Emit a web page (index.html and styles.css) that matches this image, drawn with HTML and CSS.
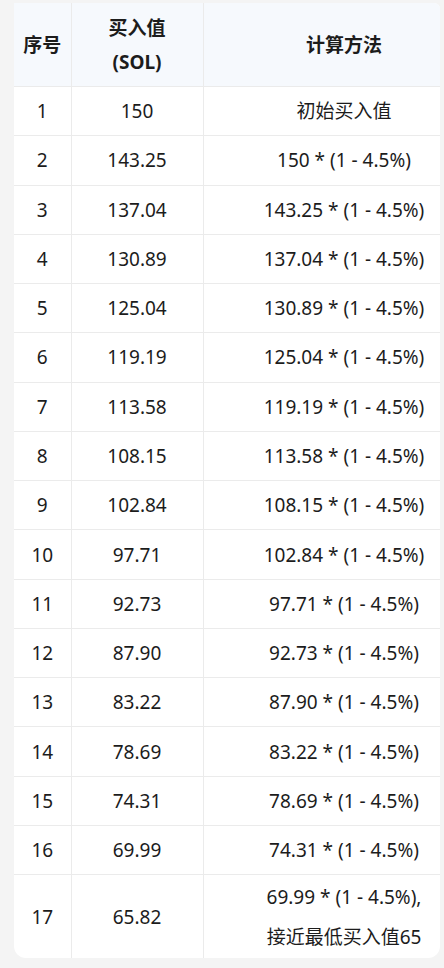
FILE: index.html
```html
<!DOCTYPE html>
<html lang="zh-CN">
<head>
    <meta charset="UTF-8">
    <meta name="viewport" content="width=device-width, initial-scale=1.0">
    <title>买入值计算</title>
    <link rel="stylesheet" href="styles.css">
</head>
<body>
    <div class="tabela-card">
        <table class="tabela">
            <colgroup>
                <col class="col-num">
                <col class="col-val">
                <col class="col-calc">
            </colgroup>
            <thead>
                <tr>
                    <th>序号</th>
                    <th>买入值<br>(SOL)</th>
                    <th>计算方法</th>
                </tr>
            </thead>
            <tbody>
                <tr><td>1</td><td>150</td><td>初始买入值</td></tr>
                <tr><td>2</td><td>143.25</td><td>150 * (1 - 4.5%)</td></tr>
                <tr><td>3</td><td>137.04</td><td>143.25 * (1 - 4.5%)</td></tr>
                <tr><td>4</td><td>130.89</td><td>137.04 * (1 - 4.5%)</td></tr>
                <tr><td>5</td><td>125.04</td><td>130.89 * (1 - 4.5%)</td></tr>
                <tr><td>6</td><td>119.19</td><td>125.04 * (1 - 4.5%)</td></tr>
                <tr><td>7</td><td>113.58</td><td>119.19 * (1 - 4.5%)</td></tr>
                <tr><td>8</td><td>108.15</td><td>113.58 * (1 - 4.5%)</td></tr>
                <tr><td>9</td><td>102.84</td><td>108.15 * (1 - 4.5%)</td></tr>
                <tr><td>10</td><td>97.71</td><td>102.84 * (1 - 4.5%)</td></tr>
                <tr><td>11</td><td>92.73</td><td>97.71 * (1 - 4.5%)</td></tr>
                <tr><td>12</td><td>87.90</td><td>92.73 * (1 - 4.5%)</td></tr>
                <tr><td>13</td><td>83.22</td><td>87.90 * (1 - 4.5%)</td></tr>
                <tr><td>14</td><td>78.69</td><td>83.22 * (1 - 4.5%)</td></tr>
                <tr><td>15</td><td>74.31</td><td>78.69 * (1 - 4.5%)</td></tr>
                <tr><td>16</td><td>69.99</td><td>74.31 * (1 - 4.5%)</td></tr>
                <tr class="ultima"><td>17</td><td>65.82</td><td>69.99 * (1 - 4.5%),<br>接近最低买入值65</td></tr>
            </tbody>
        </table>
    </div>
</body>
</html>
```

FILE: styles.css
```css
:root {
    --fundo: #f4f4f4;
    --branco: #ffffff;
    --cabecalho: #f6f9fd;
    --linha: #ebebeb;
    --texto: #1c1c1c;
}

body {
    margin: 0;
    padding-top: 3px;
    background-color: var(--fundo);
    font-family: "Noto Sans", "Noto Sans CJK SC", sans-serif;
    color: var(--texto);
}

.tabela-card {
    margin-left: 14px;
    width: 426px;
    background-color: var(--branco);
    border-radius: 0 6px 12px 12px;
    overflow: hidden;
}

.tabela {
    width: 471px;
    table-layout: fixed;
    border-collapse: collapse;
    font-size: 19px;
}

.tabela .col-num { width: 57px; }
.tabela .col-val { width: 132px; }
.tabela .col-calc { width: 282px; }

.tabela th, .tabela td {
    border: 1px solid var(--linha);
    text-align: center;
    padding: 0 4px;
}

.tabela th {
    background-color: var(--cabecalho);
    font-weight: 700;
    line-height: 34px;
    height: 83px;
    border-top: none;
}

.tabela td {
    height: 48.27px;
    line-height: 26px;
}

.tabela tr > :first-child { border-left: none; }
.tabela tbody tr:last-child td { border-bottom: none; }

.tabela .ultima td {
    height: 83px;
    line-height: 40px;
}
```
